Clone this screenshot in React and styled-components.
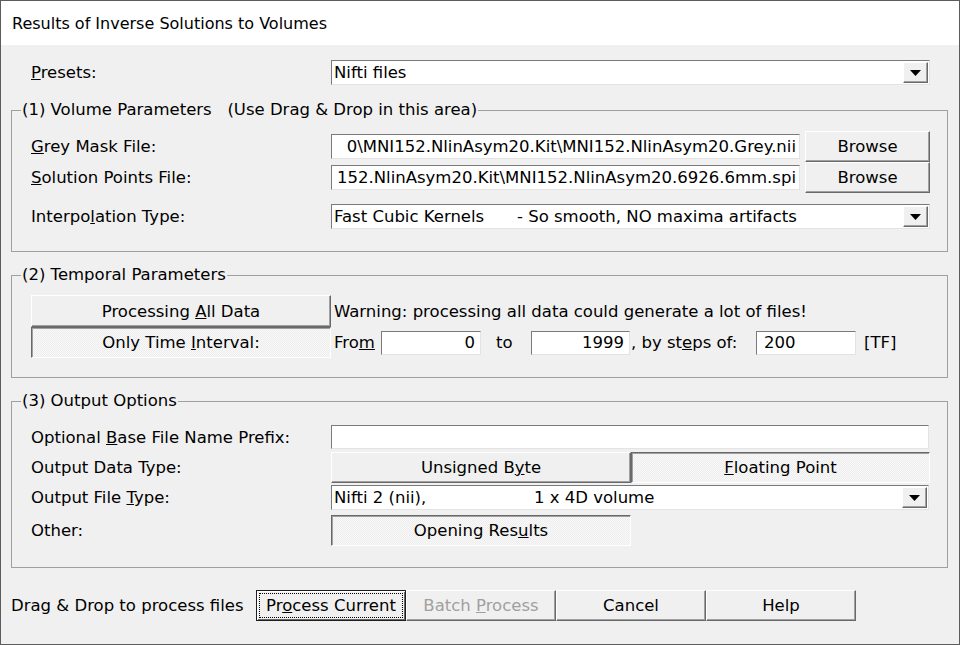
import styled, { createGlobalStyle, css } from "styled-components";

const GlobalStyle = createGlobalStyle`
  html, body {
    margin: 0;
    background: #fff;
  }
  body {
    font-family: "DejaVu Sans", "Liberation Sans", sans-serif;
    font-size: 16px;
    color: #000;
  }
`;

const sunken = css`
  box-sizing: border-box;
  border: 1px solid;
  border-color: #7a7a7a #e3e3e3 #e3e3e3 #7a7a7a;
  background: #fff;
`;

const raised = css`
  border: 1px solid;
  border-color: #fff #696969 #696969 #fff;
  box-shadow: inset -1px -1px 0 #a0a0a0;
  background: #f0f0f0;
`;

const pressed = css`
  border: 1px solid;
  border-color: #696969 #fff #fff #696969;
  box-shadow: inset 1px 1px 0 #a0a0a0;
  background: repeating-conic-gradient(#fafafa 0 25%, #ececec 0 50%) 0 0 / 2px 2px;
`;

const App = () => {
  return (
    <>
      <GlobalStyle />
      <Window>
        <TitleBar>Results of Inverse Solutions to Volumes</TitleBar>
        <Body>
          <PresetRow>
            <Label>
              <u>P</u>resets:
            </Label>
            <Combo $w={599}>
              <ComboText>Nifti files</ComboText>
              <ComboArrow>
                <Triangle />
              </ComboArrow>
            </Combo>
          </PresetRow>

          <Group $mt={15}>
            <Legend>(1) Volume Parameters&nbsp;&nbsp;&nbsp;(Use Drag &amp; Drop in this area)</Legend>
            <GroupInner $pad="11px 17px 22px 19px">
              <Row $h={31}>
                <Label>
                  <u>G</u>rey Mask File:
                </Label>
                <PathEdit>0\MNI152.NlinAsym20.Kit\MNI152.NlinAsym20.Grey.nii</PathEdit>
                <Button $w={125} $h={31} $ml={5}>
                  Browse
                </Button>
              </Row>
              <Row $h={31}>
                <Label>
                  <u>S</u>olution Points File:
                </Label>
                <PathEdit>152.NlinAsym20.Kit\MNI152.NlinAsym20.6926.6mm.spi</PathEdit>
                <Button $w={125} $h={31} $ml={5}>
                  Browse
                </Button>
              </Row>
              <Row $h={25} $mt={11}>
                <Label>
                  Interpo<u>l</u>ation Type:
                </Label>
                <Combo $w={599}>
                  <ComboText>
                    <ComboName $w={183}>Fast Cubic Kernels</ComboName>- So smooth, NO maxima artifacts
                  </ComboText>
                  <ComboArrow>
                    <Triangle />
                  </ComboArrow>
                </Combo>
              </Row>
            </GroupInner>
          </Group>

          <Group $mt={13}>
            <Legend>(2) Temporal Parameters</Legend>
            <GroupInner $pad="10px 18px 19px 19px">
              <TemporalGrid>
                <Button $w={300} $h={32}>
                  Processing <u>A</u>ll Data
                </Button>
                <Note>Warning: processing all data could generate a lot of files!</Note>
                <Button $w={300} $h={31} $pressed>
                  Only Time <u>I</u>nterval:
                </Button>
                <IntervalRow>
                  <Cell $w={47}>
                    Fro<u>m</u>
                  </Cell>
                  <NumEdit $w={100} $align="right">
                    0
                  </NumEdit>
                  <Cell $w={50} $pl={15}>
                    to
                  </Cell>
                  <NumEdit $w={99} $align="right">
                    1999
                  </NumEdit>
                  <Cell $w={126} $pl={1}>
                    , by st<u>e</u>ps of:
                  </Cell>
                  <NumEdit $w={100} $align="left">
                    200
                  </NumEdit>
                  <Cell $pl={8}>[TF]</Cell>
                </IntervalRow>
              </TemporalGrid>
            </GroupInner>
          </Group>

          <Group $mt={13}>
            <Legend>(3) Output Options</Legend>
            <GroupInner $pad="14px 18px 21px 19px">
              <Row $h={24}>
                <Label>
                  Optional <u>B</u>ase File Name Prefix:
                </Label>
                <TextEdit $w={599} />
              </Row>
              <Row $h={31} $mt={3}>
                <Label>Output Data Type:</Label>
                <Button $w={300} $h={31}>
                  Unsigned B<u>y</u>te
                </Button>
                <Button $w={299} $h={31} $pressed>
                  <u>F</u>loating Point
                </Button>
              </Row>
              <Row $h={25} $mt={2}>
                <Label>
                  Output File <u>T</u>ype:
                </Label>
                <Combo $w={599}>
                  <ComboText>
                    <ComboName $w={200}>Nifti 2 (nii),</ComboName>1 x 4D volume
                  </ComboText>
                  <ComboArrow>
                    <Triangle />
                  </ComboArrow>
                </Combo>
              </Row>
              <Row $h={31} $mt={5}>
                <Label>Other:</Label>
                <Button $w={300} $h={31} $pressed>
                  Opening Res<u>u</u>lts
                </Button>
              </Row>
            </GroupInner>
          </Group>

          <ActionBar>
            <Label $w={245}>Drag &amp; Drop to process files</Label>
            <Button $w={150} $h={31} $default>
              <FocusRing>
                Pr<u>o</u>cess Current
              </FocusRing>
            </Button>
            <Button $w={150} $h={31} disabled>
              Batch <u>P</u>rocess
            </Button>
            <Button $w={150} $h={31}>
              Cancel
            </Button>
            <Button $w={150} $h={31}>
              Help
            </Button>
          </ActionBar>
        </Body>
      </Window>
    </>
  );
};

const Triangle = () => (
  <svg width="11" height="6" viewBox="0 0 11 6">
    <polygon points="0,0 11,0 5.5,6" fill="#000" />
  </svg>
);

const Window = styled.div`
  width: 960px;
  height: 645px;
  box-sizing: border-box;
  border: 1px solid #5c5c5c;
  background: #f0f0f0;
  display: flex;
  flex-direction: column;
  overflow: hidden;
`;

const TitleBar = styled.div`
  height: 44px;
  flex: none;
  background: #fff;
  padding-left: 11px;
  display: flex;
  align-items: center;
`;

const Body = styled.div`
  padding: 15px 11px 0 10px;
  display: flex;
  flex-direction: column;
  font-size: 16.5px;
`;

const PresetRow = styled.div`
  display: flex;
  align-items: center;
  height: 25px;
  padding-left: 20px;
`;

const Label = styled.div`
  width: ${(p) => p.$w || 300}px;
  flex: none;
  white-space: nowrap;
`;

const Group = styled.fieldset`
  margin: ${(p) => p.$mt}px 0 0 0;
  padding: 0;
  border: 1px solid #a0a0a0;
  min-width: 0;
`;

const Legend = styled.legend`
  margin-left: 9px;
  padding: 0 1px;
  line-height: 20px;
  white-space: nowrap;
`;

const GroupInner = styled.div`
  padding: ${(p) => p.$pad};
  display: flex;
  flex-direction: column;
`;

const Row = styled.div`
  display: flex;
  align-items: center;
  height: ${(p) => p.$h}px;
  margin-top: ${(p) => p.$mt || 0}px;
`;

const Combo = styled.div`
  ${sunken}
  width: ${(p) => p.$w}px;
  height: 25px;
  padding: 1px;
  display: flex;
  align-items: stretch;
`;

const ComboText = styled.div`
  flex: 1;
  padding-left: 1px;
  display: flex;
  align-items: center;
  white-space: pre;
  overflow: hidden;
`;

const ComboName = styled.span`
  display: inline-block;
  width: ${(p) => p.$w}px;
`;

const ComboArrow = styled.div`
  width: 25px;
  box-sizing: border-box;
  ${raised}
  display: flex;
  align-items: center;
  justify-content: center;
`;

const PathEdit = styled.div`
  ${sunken}
  width: 469px;
  height: 25px;
  flex: none;
  padding: 0 3px 0 2px;
  display: flex;
  align-items: center;
  justify-content: flex-end;
  white-space: nowrap;
`;

const TextEdit = styled.div`
  ${sunken}
  width: ${(p) => p.$w}px;
  height: 24px;
`;

const NumEdit = styled.div`
  ${sunken}
  width: ${(p) => p.$w}px;
  height: 24px;
  flex: none;
  display: flex;
  align-items: center;
  justify-content: ${(p) => (p.$align === "right" ? "flex-end" : "flex-start")};
  padding: ${(p) => (p.$align === "right" ? "0 5px 0 0" : "0 0 0 7px")};
`;

const Button = styled.button`
  box-sizing: border-box;
  width: ${(p) => p.$w}px;
  height: ${(p) => p.$h}px;
  margin: 0 0 0 ${(p) => p.$ml || 0}px;
  padding: 0;
  flex: none;
  font: inherit;
  color: ${(p) => (p.disabled ? "#a0a0a0" : "#000")};
  text-align: center;
  white-space: nowrap;
  ${(p) => (p.$pressed ? pressed : raised)}
  ${(p) =>
    p.$default &&
    css`
      border: 1px solid #1e1e1e;
      box-shadow: inset 1px 1px 0 #fff, inset -1px -1px 0 #696969;
      padding: 2px;
    `}
`;

const FocusRing = styled.span`
  box-sizing: border-box;
  display: block;
  height: 25px;
  line-height: 23px;
  border: 1px dotted #000;
`;

const TemporalGrid = styled.div`
  display: grid;
  grid-template-columns: 300px 1fr;
  column-gap: 3px;
  align-items: center;
`;

const Note = styled.div`
  white-space: nowrap;
`;

const IntervalRow = styled.div`
  display: flex;
  align-items: center;
`;

const Cell = styled.div`
  box-sizing: border-box;
  flex: none;
  width: ${(p) => (p.$w ? `${p.$w}px` : "auto")};
  padding-left: ${(p) => p.$pl || 0}px;
  white-space: nowrap;
`;

const ActionBar = styled.div`
  display: flex;
  align-items: center;
  margin-top: 22px;
`;

export default App;
